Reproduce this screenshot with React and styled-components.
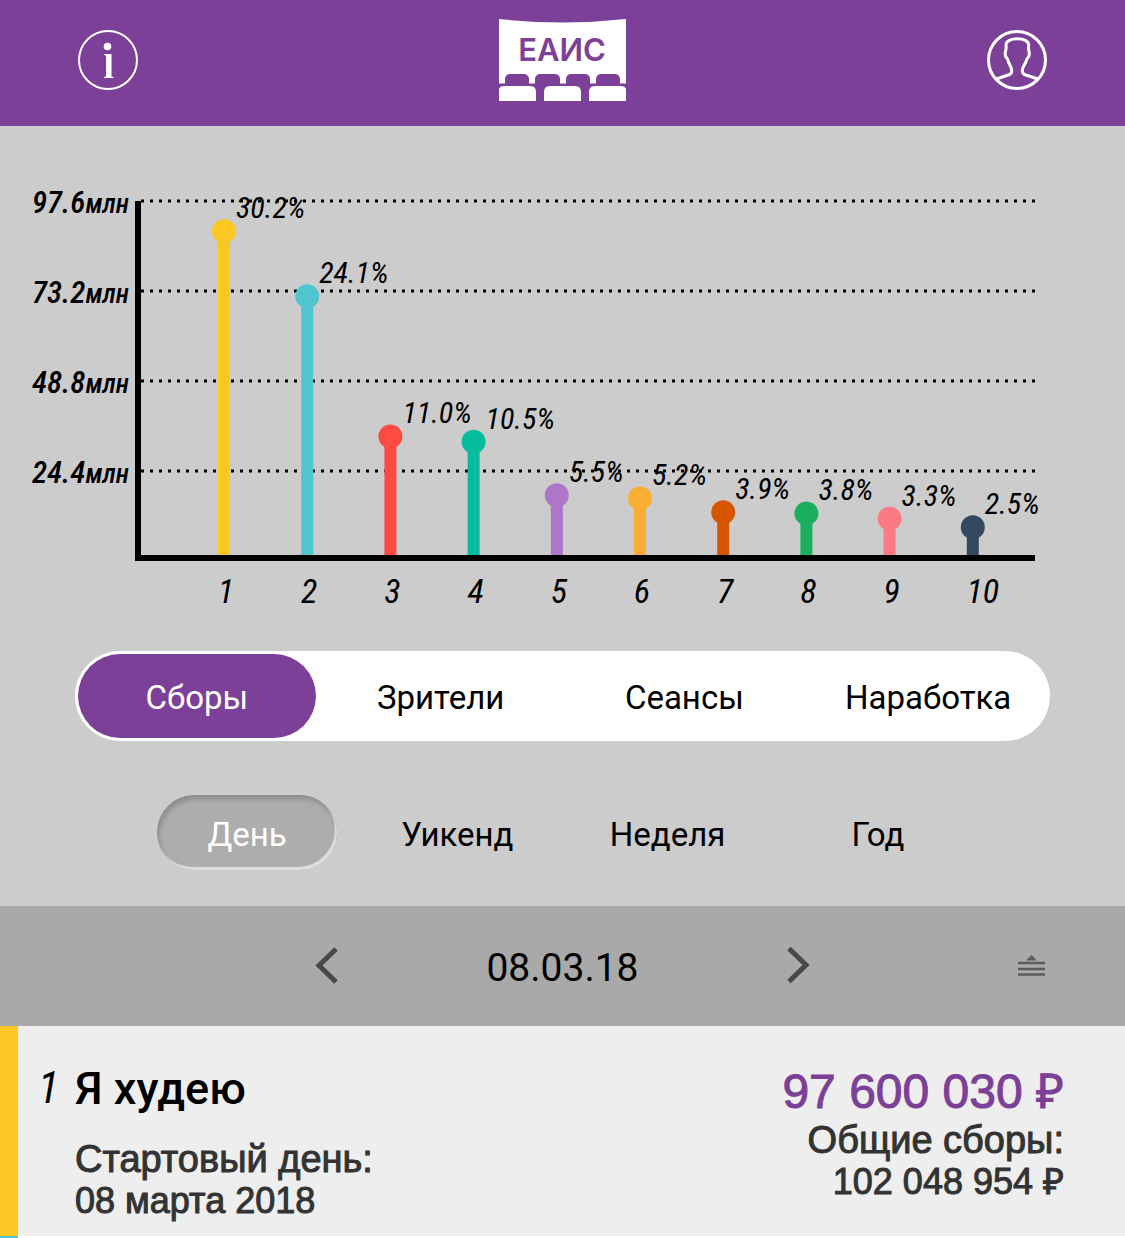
import React, { useState } from 'react';
import styled, { createGlobalStyle } from 'styled-components';

const GlobalStyle = createGlobalStyle`
	* {
		box-sizing: border-box;
	}
	body {
		margin: 0;
		background: #ccc;
		color: #000;
		font-family: Roboto, "Liberation Sans", sans-serif;
	}
	button {
		border: 0;
		padding: 0;
		background: none;
		color: inherit;
		font: inherit;
		cursor: pointer;
	}
	svg {
		display: block;
	}
`;

const Page = styled.div`
	display: flex;
	flex-direction: column;
	min-height: 100vh;
`;
const Header = styled.header`
	display: flex;
	align-items: center;
	justify-content: space-between;
	padding: 19px 78px 25px;
	background: #7d4098;
`;
const ChartText = styled.text`
	font-family: "Roboto Condensed", "Liberation Sans Narrow", sans-serif;
	font-size: ${props => props.$size}px;
	font-style: italic;
	font-weight: ${props => props.$weight || 400};
`;
const Unit = styled.tspan`
	font-size: 27px;
`;
const ChartBox = styled.svg`
	width: 100%;
	height: auto;
`;
const Metrics = styled.nav`
	display: flex;
	margin: 0 75px;
	background: #fff;
	border-radius: 45px;
`;
const Metric = styled.button`
	flex: 1 1 0;
	height: 84px;
	margin: 3px;
	border-radius: 42px;
	background: ${props => (props.$active ? '#7d4098' : 'transparent')};
	color: ${props => (props.$active ? '#fff' : '#000')};
	font-size: 33px;
	line-height: 40px;
	padding-top: 4px;
`;
const Periods = styled.nav`
	display: flex;
	margin: 54px 142px 36px;
`;
const Period = styled.button`
	flex: 1 1 0;
	height: 75px;
	margin: 0 15px;
	padding-top: 4px;
	border-radius: 38px;
	background: ${props => (props.$active ? '#adadad' : 'transparent')};
	box-shadow: ${props =>
		props.$active
			? 'inset -2px -3px 1px #dedede, inset 2px 4px 5px #8c8c8c'
			: 'none'};
	color: ${props => (props.$active ? '#fff' : '#000')};
	font-size: 33px;
	line-height: 40px;
`;
const DateBar = styled.div`
	display: grid;
	grid-template-columns: 1fr 54px 416px 54px 1fr;
	align-items: center;
	height: 120px;
	padding-bottom: 2px;
	background: #a9a9a9;
`;
const ArrowButton = styled.button`
	display: flex;
	justify-content: center;
	grid-column: ${props => props.$column};
`;
const DateText = styled.time`
	font-size: 39px;
	line-height: 48px;
	padding-top: 6px;
	text-align: center;
`;
const ListButton = styled.button`
	justify-self: end;
	margin-right: 80px;
`;
const Row = styled.article`
	display: flex;
	align-items: flex-start;
	padding: 36px 61px 14px 20px;
	border-left: 18px solid ${props => props.$color};
	background: #eee;
`;
const NextRow = styled.div`
	flex: 1;
	min-height: 2px;
	border-left: 18px solid ${props => props.$color};
	background: #fff;
`;
const Rank = styled.span`
	width: 37px;
	font-family: "Roboto Condensed", "Liberation Sans Narrow", sans-serif;
	font-size: 44px;
	font-style: italic;
	line-height: 52px;
`;
const Film = styled.div`
	flex: 1;
`;
const Title = styled.h2`
	margin: 0 0 22px;
	font-size: 45px;
	font-weight: 500;
	line-height: 54px;
`;
const Totals = styled.div`
	text-align: right;
`;
const Line = styled.p`
	margin: 0;
	color: #333;
	font-family: "Liberation Sans", Arial, sans-serif;
	font-size: 36px;
	line-height: 42px;
	-webkit-text-stroke: 1px;
`;
const Caption = styled(Line)`
	font-size: 38px;
`;
const Amount = styled(Line)`
	padding-top: 3px;
	color: #7d4098;
	font-size: 48px;
	line-height: 54px;
`;

const bars = [
	{ percent: 30.2, color: '#fcc623' },
	{ percent: 24.1, color: '#51c5cf' },
	{ percent: 11.0, color: '#ff4a43' },
	{ percent: 10.5, color: '#05bc9c' },
	{ percent: 5.5, color: '#ae76c8' },
	{ percent: 5.2, color: '#f8ae30' },
	{ percent: 3.9, color: '#d65500' },
	{ percent: 3.8, color: '#1bae5f' },
	{ percent: 3.3, color: '#fb7b84' },
	{ percent: 2.5, color: '#34495f' },
];
const levels = ['97.6', '73.2', '48.8', '24.4'];
const metrics = ['Сборы', 'Зрители', 'Сеансы', 'Наработка'];
const periods = ['День', 'Уикенд', 'Неделя', 'Год'];

const InfoIcon = () => (
	<svg width="60" height="60" viewBox="0 0 60 60" fill="none">
		<circle cx="30" cy="30" r="29" stroke="#fff" strokeWidth="2" />
		<circle cx="29.5" cy="16.5" r="3.8" fill="#fff" />
		<path d="M26 24h7.500v22.500l2 .5v1h-9.500v-1l2-.5V25.500l-2-.5z" fill="#fff" />
	</svg>
);

const UserIcon = () => (
	<svg width="60" height="60" viewBox="0 0 60 60" fill="none" stroke="#fff">
		<circle cx="30" cy="30" r="28.500" strokeWidth="3" />
		<path
			d="M9.500 49L22.500 44.500Q25 43.500 24.700 40C24.500 37 22 34 21.300 31.500Q21 29 18.700 26.500Q17.800 24 18.500 21Q19.500 19 19 15C19 11 24 8.700 30.300 8.700S41.700 11 41.700 15Q41 19 42 21Q42.700 24 41.800 26.500Q39.500 29 39 31.500C38.300 34 35.500 37 35.300 40Q35.200 43.500 37.500 44.500L50.700 49"
			strokeWidth="3"
			strokeLinejoin="round"
		/>
	</svg>
);

const Logo = () => (
	<svg width="127" height="82" viewBox="0 0 127 82" role="img" aria-label="ЕАИС">
		<path d="M0 0Q63.500 7 127 0V82H0z" fill="#fff" />
		<text
			x="63"
			y="42"
			textAnchor="middle"
			fill="#7d4098"
			fontFamily="Inter, sans-serif"
			fontSize="31"
			fontWeight="600"
		>
			ЕАИС
		</text>
		<g fill="#7d4098">
			<path d="M0 64.500H127V82H0z" />
			<rect x="6" y="55" width="24" height="16" rx="5" />
			<rect x="36" y="55" width="25" height="16" rx="5" />
			<rect x="67" y="55" width="24" height="16" rx="5" />
			<rect x="97" y="55" width="24" height="16" rx="5" />
		</g>
		<g fill="#fff">
			<path d="M0 82V70q1-3 5-3H31q6 0 6 6v9z" />
			<path d="M45 82V73q0-6 6-6H76q6 0 6 6v9z" />
			<path d="M90 82V73q0-6 6-6H122q4 0 5 3V82z" />
		</g>
	</svg>
);

const Chart = () => (
	<ChartBox viewBox="0 0 1125 525" role="img" aria-label="Сборы, млн">
		{levels.map((level, i) => (
			<g key={level}>
				<ChartText $size={31} $weight={500} x="129" y={87 + i * 90} textAnchor="end">
					{level}
					<Unit>млн</Unit>
				</ChartText>
				<path
					d={`M141 ${75 + i * 90}H1036`}
					stroke="#000"
					strokeWidth="3"
					strokeDasharray="3 6"
				/>
			</g>
		))}
		{bars.map((bar, i) => {
			const x = 224 + i * 83.2;
			const y = 428 - bar.percent * 10.69;
			return (
				<g key={bar.color}>
					<path d={`M${x} ${y}V429`} stroke={bar.color} strokeWidth="12" />
					<circle cx={x} cy={y} r="12" fill={bar.color} />
					<ChartText $size={30} x={x + 12} y={y - 13}>
						{bar.percent.toFixed(1)}%
					</ChartText>
					<ChartText $size={34} x={x + (i > 8 ? 10 : 2)} y="477" textAnchor="middle">
						{i + 1}
					</ChartText>
				</g>
			);
		})}
		<path d="M138 75V432H1035" fill="none" stroke="#000" strokeWidth="6" />
	</ChartBox>
);

const Arrow = ({ d }) => (
	<svg width="26" height="38" viewBox="0 0 26 38" fill="none" stroke="#484848" strokeWidth="5">
		<path d={d} />
	</svg>
);

const ListIcon = () => (
	<svg width="27" height="22" viewBox="0 0 27 22" fill="none" stroke="#5c5c5c">
		<path d="M0 9h27M0 15h27M0 20.500h27" strokeWidth="2.500" />
		<path d="M10.500 5.500l3-3 3 3z" strokeWidth="2" />
	</svg>
);

const App = () => {
	const [metric, setMetric] = useState(metrics[0]);
	const [period, setPeriod] = useState(periods[0]);

	return (
		<Page>
			<GlobalStyle />
			<Header>
				<button type="button" aria-label="Информация">
					<InfoIcon />
				</button>
				<Logo />
				<button type="button" aria-label="Профиль">
					<UserIcon />
				</button>
			</Header>
			<Chart />
			<Metrics>
				{metrics.map(name => (
					<Metric
						key={name}
						type="button"
						$active={name === metric}
						onClick={() => setMetric(name)}
					>
						{name}
					</Metric>
				))}
			</Metrics>
			<Periods>
				{periods.map(name => (
					<Period
						key={name}
						type="button"
						$active={name === period}
						onClick={() => setPeriod(name)}
					>
						{name}
					</Period>
				))}
			</Periods>
			<DateBar>
				<ArrowButton type="button" $column={2} aria-label="Предыдущий день">
					<Arrow d="M21 3L4 19.500l17 16.500" />
				</ArrowButton>
				<DateText dateTime="2018-03-08">08.03.18</DateText>
				<ArrowButton type="button" $column={4} aria-label="Следующий день">
					<Arrow d="M4 2.500l17 16.500L4 35.500" />
				</ArrowButton>
				<ListButton type="button" aria-label="Список">
					<ListIcon />
				</ListButton>
			</DateBar>
			<Row $color="#fcc623">
				<Rank>1</Rank>
				<Film>
					<Title>Я худею</Title>
					<Caption>Стартовый день:</Caption>
					<Line>08 марта 2018</Line>
				</Film>
				<Totals>
					<Amount>97 600 030 ₽</Amount>
					<Caption>Общие сборы:</Caption>
					<Line>102 048 954 ₽</Line>
				</Totals>
			</Row>
			<NextRow $color="#51c5cf" />
		</Page>
	);
};

export default App;
